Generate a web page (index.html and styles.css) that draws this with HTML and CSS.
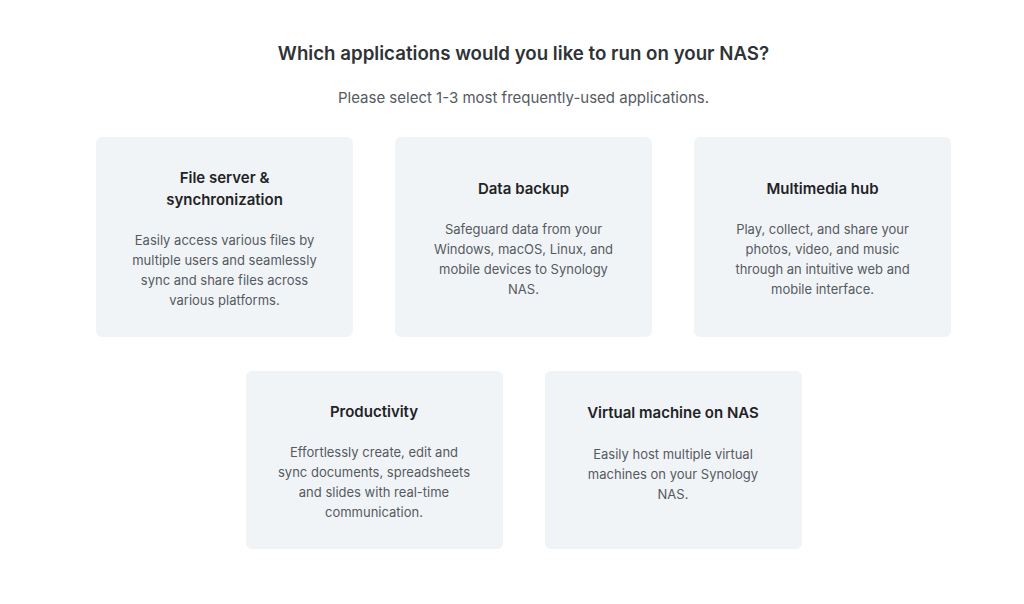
FILE: index.html
```html
<!DOCTYPE html>
<html lang="en">
<head>
<meta charset="utf-8">
<title>Applications</title>
<link rel="stylesheet" href="styles.css">
</head>
<body>
<main class="page">
  <h1 class="heading">Which applications would you like to run on your NAS?</h1>
  <p class="sub">Please select 1-3 most frequently-used applications.</p>
  <div class="grid">
    <div class="card card--centered">
      <h2 class="card-title">File server &amp;<br>synchronization</h2>
      <p class="card-text">Easily access various files by multiple users and seamlessly sync and share files across various platforms.</p>
    </div>
    <div class="card card--centered">
      <h2 class="card-title">Data backup</h2>
      <p class="card-text">Safeguard data from your Windows, macOS, Linux, and mobile devices to Synology NAS.</p>
    </div>
    <div class="card card--centered">
      <h2 class="card-title">Multimedia hub</h2>
      <p class="card-text">Play, collect, and share your photos, video, and music through an intuitive web and mobile interface.</p>
    </div>
    <div class="card">
      <h2 class="card-title">Productivity</h2>
      <p class="card-text">Effortlessly create, edit and sync documents, spreadsheets and slides with real-time communication.</p>
    </div>
    <div class="card card--low">
      <h2 class="card-title">Virtual machine on NAS</h2>
      <p class="card-text">Easily host multiple virtual machines on your Synology NAS.</p>
    </div>
  </div>
</main>
</body>
</html>
```
FILE: styles.css
```css
html, body {
  margin: 0;
  padding: 0;
  background: #ffffff;
}
body {
  font-family: Inter, "Noto Sans", "Liberation Sans", sans-serif;
  color: #333;
}
.page {
  width: 1024px;
  box-sizing: border-box;
  padding: 42px 0 0 23px;
  display: flex;
  flex-direction: column;
  align-items: center;
}
.heading {
  margin: 0;
  font-size: 18.7px;
  line-height: 24px;
  font-weight: 600;
  color: #2f3336;
}
.sub {
  margin: 22px 0 0;
  font-size: 15px;
  line-height: 20px;
  color: #555a5f;
}
.grid {
  margin-top: 29px;
  width: 855px;
  display: flex;
  flex-wrap: wrap;
  justify-content: center;
  gap: 34px 42px;
}
.card {
  width: 257px;
  box-sizing: border-box;
  padding: 30px 26px 27px;
  background: #f1f4f7;
  border-radius: 6px;
  display: flex;
  flex-direction: column;
  justify-content: flex-start;
  align-items: center;
  text-align: center;
}
.card--centered {
  justify-content: center;
}
.card--low {
  padding-top: 31px;
}
.card-title {
  margin: 0;
  font-size: 15px;
  line-height: 22px;
  font-weight: 600;
  color: #1f2326;
}
.card-text {
  margin: 19px 0 0;
  max-width: 200px;
  font-size: 13px;
  line-height: 20px;
  color: #555a5f;
}
.card--low .card-text {
  margin-top: 20px;
}
```
